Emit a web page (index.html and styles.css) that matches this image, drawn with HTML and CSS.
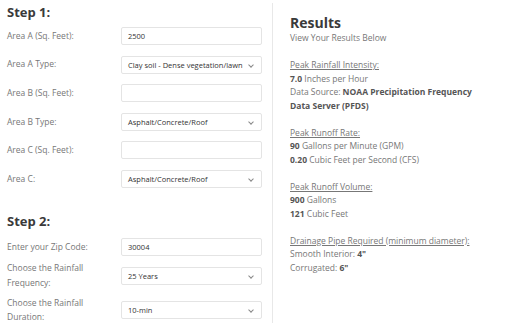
FILE: index.html
```html
<!DOCTYPE html>
<html lang="en">
<head>
  <meta charset="UTF-8" />
  <title>Rainfall Runoff Calculator</title>
  <link rel="stylesheet" href="styles.css">
</head>
<body>
  <div class="calc">
    <div class="inputs">
      <h2>Step 1:</h2>
      <div class="form">
        <div class="row">
          <label>Area A (Sq. Feet):</label>
          <div class="field">2500</div>
        </div>
        <div class="row">
          <label>Area A Type:</label>
          <div class="field select">Clay soil - Dense vegetation/lawn</div>
        </div>
        <div class="row">
          <label>Area B (Sq. Feet):</label>
          <div class="field"></div>
        </div>
        <div class="row">
          <label>Area B Type:</label>
          <div class="field select">Asphalt/Concrete/Roof</div>
        </div>
        <div class="row">
          <label>Area C (Sq. Feet):</label>
          <div class="field"></div>
        </div>
        <div class="row">
          <label>Area C:</label>
          <div class="field select">Asphalt/Concrete/Roof</div>
        </div>
      </div>

      <h2 class="step2">Step 2:</h2>
      <div class="form tight">
        <div class="row">
          <label>Enter your Zip Code:</label>
          <div class="field">30004</div>
        </div>
        <div class="row">
          <label>Choose the Rainfall<br>Frequency:</label>
          <div class="field select">25 Years</div>
        </div>
        <div class="row">
          <label>Choose the Rainfall<br>Duration:</label>
          <div class="field select">10-min</div>
        </div>
      </div>
    </div>

    <div class="results">
      <h2>Results</h2>
      <p class="sub">View Your Results Below</p>

      <p>
        <u>Peak Rainfall Intensity:</u><br>
        <b>7.0</b> Inches per Hour<br>
        Data Source: <b>NOAA Precipitation Frequency</b><br>
        <b>Data Server (PFDS)</b>
      </p>

      <p>
        <u>Peak Runoff Rate:</u><br>
        <b>90</b> Gallons per Minute (GPM)<br>
        <b>0.20</b> Cubic Feet per Second (CFS)
      </p>

      <p>
        <u>Peak Runoff Volume:</u><br>
        <b>900</b> Gallons<br>
        <b>121</b> Cubic Feet
      </p>

      <p>
        <u>Drainage Pipe Required (minimum diameter):</u><br>
        Smooth Interior: <b>4"</b><br>
        Corrugated: <b>6"</b>
      </p>
    </div>
  </div>
</body>
</html>
```

FILE: styles.css
```css
* {
  box-sizing: border-box;
}
body {
  margin: 0;
  font-family: 'Open Sans', sans-serif;
  background: #fff;
  color: #777;
}
.calc {
  display: flex;
  height: 323px;
}
.inputs {
  width: 272px;
  padding: 3px 0 0 7px;
}
h2 {
  margin: 0;
  font-size: 13px;
  font-weight: 700;
  color: #3a3a3a;
  line-height: 18px;
}
.form {
  display: flex;
  flex-direction: column;
  gap: 10.6px;
  margin-top: 6px;
}
.form.tight {
  gap: 5.5px;
  margin-top: 8px;
}
.step2 {
  margin-top: 24px;
}
.row {
  display: grid;
  grid-template-columns: 114px 141px;
  align-items: center;
}
label {
  font-size: 8.5px;
  line-height: 14.5px;
}
.field {
  height: 18px;
  border: 1px solid #e4e4e4;
  border-radius: 2px;
  padding: 0 6px;
  font-size: 7.5px;
  line-height: 16px;
  color: #333;
  position: relative;
}
.select::after {
  content: "";
  position: absolute;
  right: 8px;
  top: 6px;
  width: 3px;
  height: 3px;
  border-right: 1px solid #888;
  border-bottom: 1px solid #888;
  transform: rotate(45deg);
}
.results {
  border-left: 1px solid #e8e8e8;
  margin-top: 3px;
  padding: 11px 0 0 17px;
  flex: 1;
}
.results h2 {
  font-size: 14px;
  line-height: 17px;
}
.results p {
  margin: 0 0 13.5px;
  font-size: 8.5px;
  line-height: 13.5px;
  white-space: nowrap;
}
.results b {
  color: #555;
}
```
